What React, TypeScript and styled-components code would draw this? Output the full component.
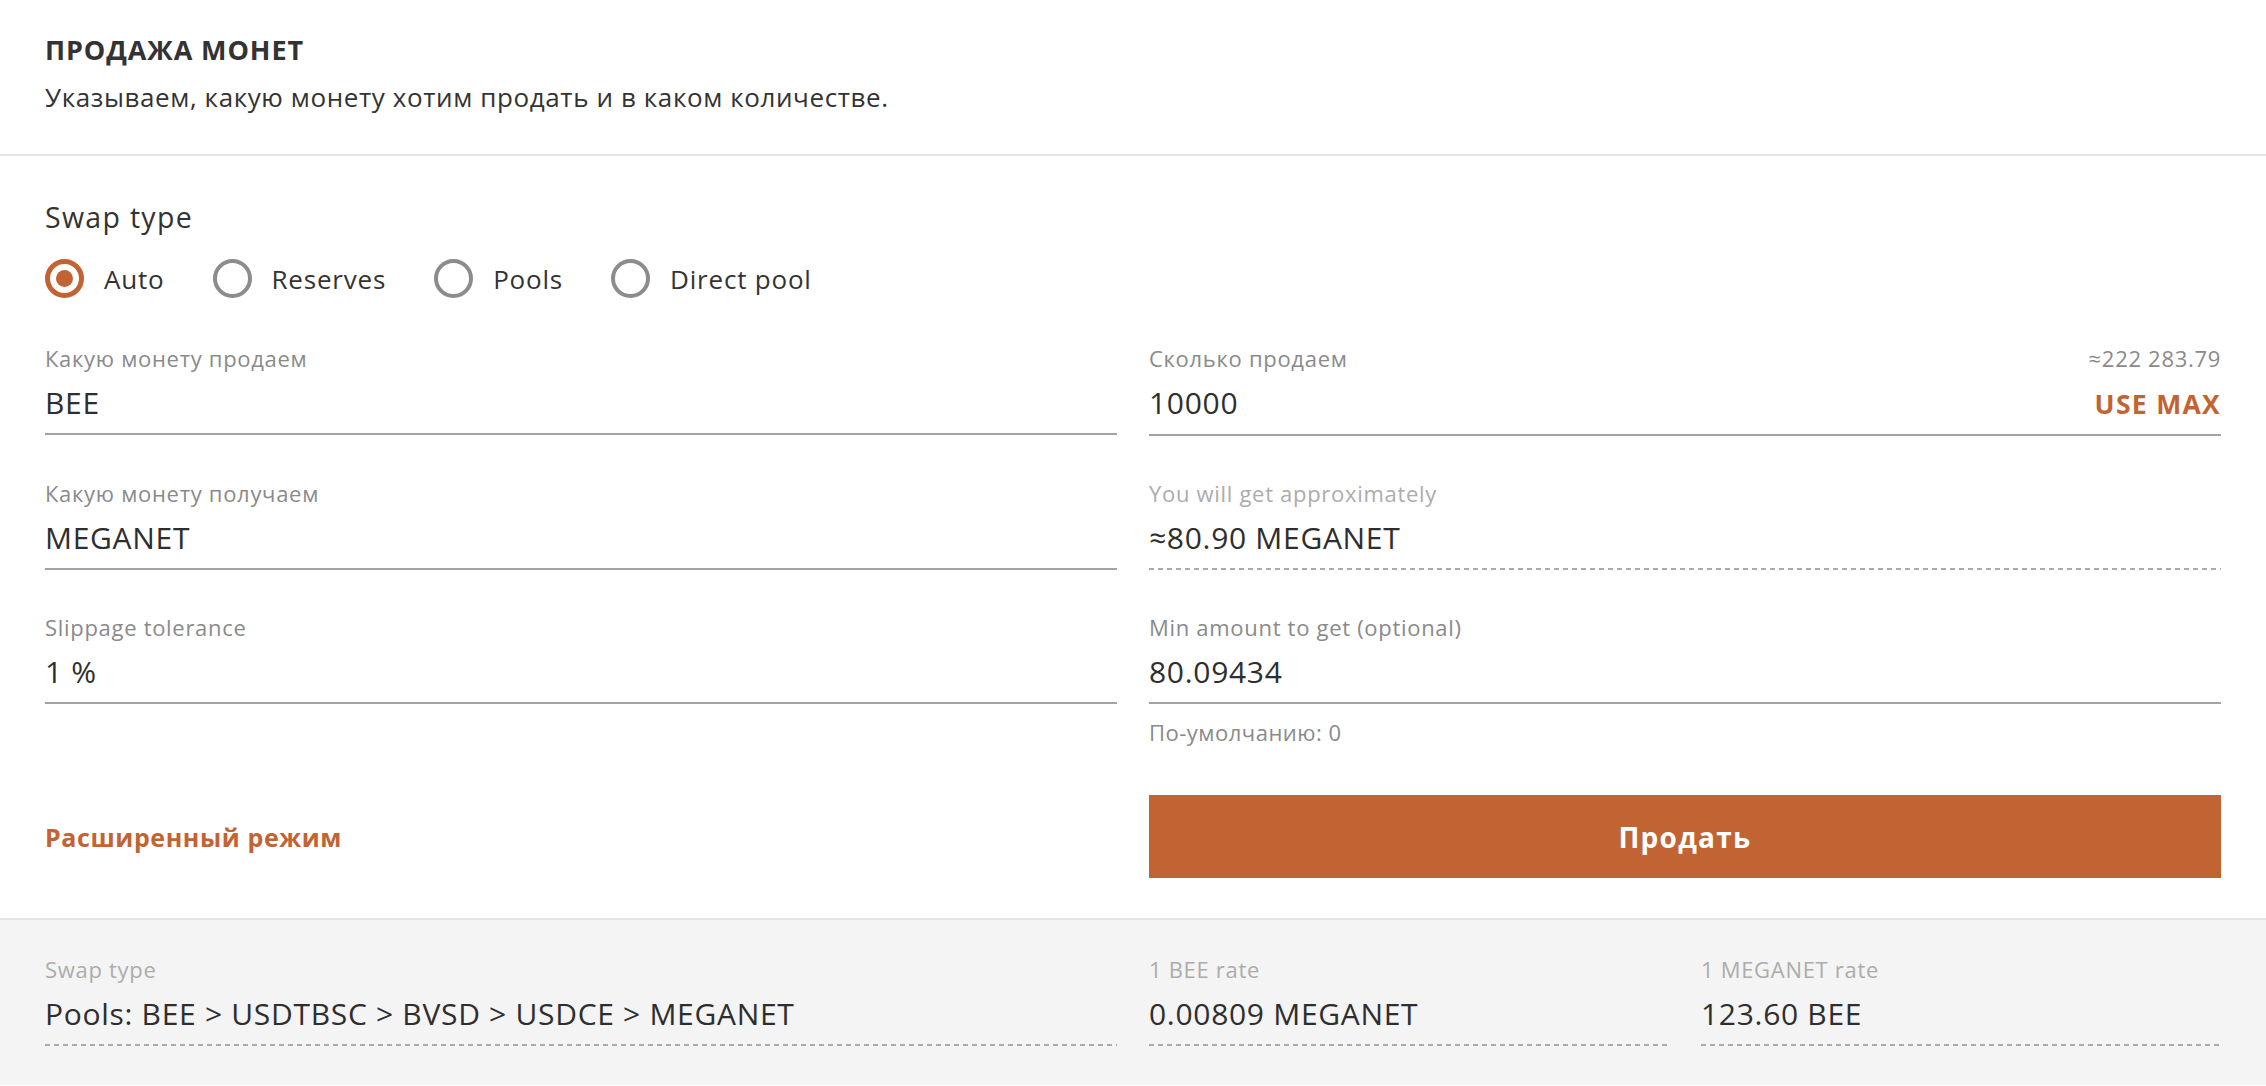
import React from "react";
import styled, { createGlobalStyle, css } from "styled-components";

const ORANGE = "#c26333";

const GlobalStyle = createGlobalStyle`
  html, body {
    margin: 0;
    padding: 0;
    background: #ffffff;
  }
  body {
    font-family: "Open Sans", "Noto Sans", sans-serif;
    color: #333333;
    -webkit-font-smoothing: antialiased;
  }
  * { box-sizing: border-box; }
`;

const Page = styled.div`
  width: 100%;
  display: flex;
  flex-direction: column;
`;

const Header = styled.header`
  padding: 32px 45px 39px;
  border-bottom: 2px solid #e6e6e6;
`;

const Title = styled.h1`
  margin: 0 0 11px;
  font-size: 27px;
  line-height: 36px;
  font-weight: 700;
  text-transform: uppercase;
  color: #333333;
  letter-spacing: 0.9px;
`;

const Subtitle = styled.p`
  margin: 0;
  font-size: 26px;
  line-height: 36px;
  color: #333333;
  letter-spacing: 0.6px;
`;

const Main = styled.section`
  padding: 43px 45px 40px;
  border-bottom: 2px solid #e6e6e6;
`;

const SectionHeading = styled.h2`
  margin: 0;
  font-size: 28.5px;
  line-height: 36px;
  font-weight: 400;
  color: #333333;
  letter-spacing: 1.3px;
`;

const RadioGroup = styled.div`
  display: flex;
  align-items: center;
  gap: 48px;
  margin-top: 24px;
  height: 39px;
`;

const RadioOption = styled.label`
  display: flex;
  align-items: center;
  gap: 20px;
  cursor: pointer;
`;

const RadioCircle = styled.span<{ $checked?: boolean }>`
  width: 39px;
  height: 39px;
  border-radius: 50%;
  border: 4px solid #8c8c8c;
  display: flex;
  align-items: center;
  justify-content: center;
  flex-shrink: 0;
  ${(p) =>
    p.$checked &&
    css`
      border: 5px solid ${ORANGE};
      &::after {
        content: "";
        width: 17px;
        height: 17px;
        border-radius: 50%;
        background: ${ORANGE};
      }
    `}
`;

const RadioText = styled.span`
  font-size: 26px;
  line-height: 36px;
  color: #333333;
  letter-spacing: 0.8px;
`;

const FormGrid = styled.div`
  display: grid;
  grid-template-columns: 1fr 1fr;
  column-gap: 32px;
  row-gap: 42px;
  margin-top: 45px;
`;

const FieldBlock = styled.div`
  display: flex;
  flex-direction: column;
  min-width: 0;
`;

const LabelRow = styled.div`
  display: flex;
  justify-content: space-between;
  align-items: baseline;
  height: 30px;
  margin-bottom: 10px;
`;

const Label = styled.span<{ $light?: boolean }>`
  font-size: 22px;
  line-height: 30px;
  color: ${(p) => (p.$light ? "#acacac" : "#8a8a8a")};
  letter-spacing: 0.7px;
  white-space: nowrap;
`;

const ValueRow = styled.div<{ $dashed?: boolean }>`
  display: flex;
  justify-content: space-between;
  align-items: baseline;
  padding-bottom: 10px;
  ${(p) =>
    p.$dashed
      ? css`
          background-image: linear-gradient(to right, #ababab 0 5px, transparent 5px 9px);
          background-size: 9px 2px;
          background-repeat: repeat-x;
          background-position: left bottom;
          padding-bottom: 12px;
        `
      : css`
          border-bottom: 2px solid #a3a3a3;
        `}
`;

const Value = styled.span`
  font-size: 30px;
  line-height: 40px;
  color: #2e2e2e;
  letter-spacing: 0.7px;
  white-space: nowrap;
`;

const UseMax = styled.button`
  border: none;
  background: none;
  padding: 0;
  font-family: inherit;
  font-size: 26.5px;
  line-height: 40px;
  font-weight: 700;
  color: ${ORANGE};
  letter-spacing: 1.3px;
  cursor: pointer;
`;

const Hint = styled.div`
  margin-top: 13px;
  padding-bottom: 6px;
  font-size: 22px;
  line-height: 30px;
  color: #8a8a8a;
  letter-spacing: 0.5px;
`;

const ActionCell = styled.div`
  display: flex;
  align-items: center;
  min-height: 83px;
`;

const AdvancedLink = styled.a`
  font-size: 25px;
  line-height: 36px;
  font-weight: 700;
  color: ${ORANGE};
  text-decoration: none;
  letter-spacing: 0.6px;
  cursor: pointer;
`;

const SubmitButton = styled.button`
  width: 100%;
  height: 83px;
  border: none;
  background: ${ORANGE};
  color: #ffffff;
  font-family: inherit;
  font-size: 28px;
  font-weight: 700;
  letter-spacing: 1.3px;
  cursor: pointer;
`;

const Summary = styled.section`
  background: #f4f4f4;
  padding: 34px 45px 39px;
`;

const SummaryGrid = styled.div`
  display: grid;
  grid-template-columns: calc((100% - 32px) / 2) 1fr 1fr;
  column-gap: 32px;
`;

type FieldProps = {
  label: string;
  value: string;
  aside?: string;
  action?: string;
  dashed?: boolean;
  lightLabel?: boolean;
  hint?: string;
};

const Field: React.FC<FieldProps> = ({ label, value, aside, action, dashed, lightLabel, hint }) => (
  <FieldBlock>
    <LabelRow>
      <Label $light={lightLabel}>{label}</Label>
      {aside && <Label>{aside}</Label>}
    </LabelRow>
    <ValueRow $dashed={dashed}>
      <Value>{value}</Value>
      {action && <UseMax type="button">{action}</UseMax>}
    </ValueRow>
    {hint && <Hint>{hint}</Hint>}
  </FieldBlock>
);

const swapTypes = [
  { id: "auto", label: "Auto", checked: true },
  { id: "reserves", label: "Reserves" },
  { id: "pools", label: "Pools" },
  { id: "direct", label: "Direct pool" },
];

export default function App() {
  return (
    <>
      <GlobalStyle />
      <Page>
        <Header>
          <Title>Продажа монет</Title>
          <Subtitle>Указываем, какую монету хотим продать и в каком количестве.</Subtitle>
        </Header>

        <Main>
          <SectionHeading>Swap type</SectionHeading>
          <RadioGroup>
            {swapTypes.map((t) => (
              <RadioOption key={t.id}>
                <RadioCircle $checked={t.checked} />
                <RadioText>{t.label}</RadioText>
              </RadioOption>
            ))}
          </RadioGroup>

          <FormGrid>
            <Field label="Какую монету продаем" value="BEE" />
            <Field label="Сколько продаем" aside="≈222 283.79" value="10000" action="USE MAX" />
            <Field label="Какую монету получаем" value="MEGANET" />
            <Field label="You will get approximately" lightLabel value="≈80.90 MEGANET" dashed />
            <Field label="Slippage tolerance" value="1 %" />
            <Field label="Min amount to get (optional)" value="80.09434" hint="По-умолчанию: 0" />
            <ActionCell>
              <AdvancedLink>Расширенный режим</AdvancedLink>
            </ActionCell>
            <ActionCell>
              <SubmitButton type="button">Продать</SubmitButton>
            </ActionCell>
          </FormGrid>
        </Main>

        <Summary>
          <SummaryGrid>
            <Field label="Swap type" lightLabel value="Pools: BEE > USDTBSC > BVSD > USDCE > MEGANET" dashed />
            <Field label="1 BEE rate" lightLabel value="0.00809 MEGANET" dashed />
            <Field label="1 MEGANET rate" lightLabel value="123.60 BEE" dashed />
          </SummaryGrid>
        </Summary>
      </Page>
    </>
  );
}
